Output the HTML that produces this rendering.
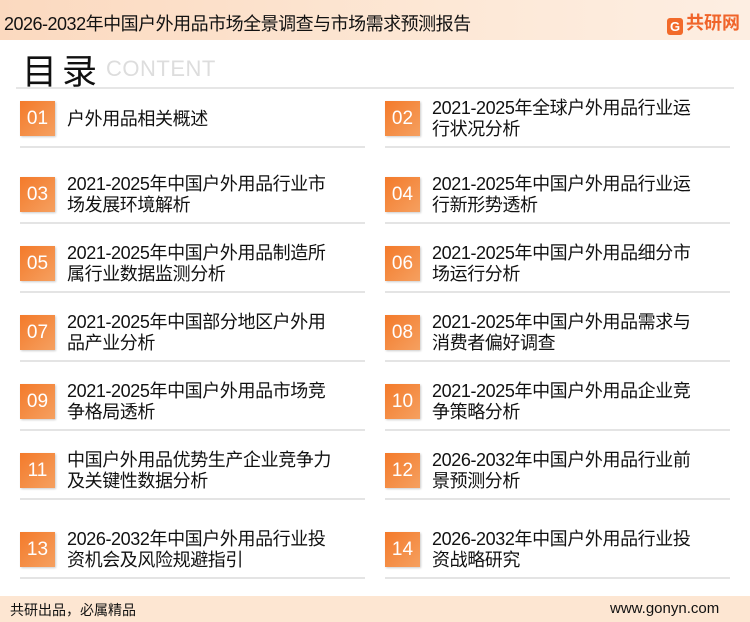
<!DOCTYPE html>
<html><head><meta charset="utf-8"><style>
*{margin:0;padding:0;box-sizing:border-box}
body{width:750px;height:622px;overflow:hidden;background:#fff;position:relative;font-family:"Liberation Sans","Noto Sans CJK SC",sans-serif;color:#111}
.hdr{position:absolute;left:0;top:0;width:750px;height:40px;background:linear-gradient(90deg,#fbd9bf,#fde8d6 60%,#fdeee2);}
.hdr .t{position:absolute;left:4px;top:10px;font-size:18px;letter-spacing:-0.5px}
.logo{position:absolute;left:667px;top:9px;font-size:18px;font-weight:bold;color:#f0642a}
.logo span{display:inline-block;width:16px;height:17px;background:#f26a2a;color:#fff;font-size:13px;text-align:center;line-height:17px;border-radius:3px;margin-right:3px;vertical-align:-2px}
.ml{position:absolute;left:22px;top:44px;font-size:35px}
.ml2{position:absolute;left:62px;top:44px;font-size:35px}
.ct{position:absolute;left:106px;top:56px;font-size:22px;color:#ddd;letter-spacing:0.5px}
.hl{position:absolute;left:16px;top:87px;width:718px;height:2px;background:#e6e6e6}
.it{position:absolute;width:345px;height:69px}
.b{position:absolute;left:0;top:5px;width:35px;height:35px;background:linear-gradient(135deg,#f47a2a,#f5a060);color:#fff;font-size:19px;text-align:center;line-height:35px;box-shadow:1px 1px 2px #ccc}
.x{position:absolute;left:47px;top:0;height:46px;width:270px;display:flex;align-items:center;font-size:18px;line-height:21px;letter-spacing:-0.4px}
.s{position:absolute;left:0;top:50px;width:345px;height:2px;background:#e4e4e4}
.ft{position:absolute;left:0;top:596px;width:750px;height:26px;background:#fde6d2}
.ft .a{position:absolute;left:10px;top:4px;font-size:14px}
.ft .w{position:absolute;left:610px;top:4px;font-size:15px}
</style></head><body>
<div class="hdr"><div class="t">2026-2032年中国户外用品市场全景调查与市场需求预测报告</div><div class="logo"><span>G</span>共研网</div></div>
<div class="ml">目</div><div class="ml2">录</div><div class="ct">CONTENT</div>
<div class="hl"></div>

<div class="it" style="left:20px;top:96px"><div class="b">01</div><div class="x">户外用品相关概述</div><div class="s"></div></div>
<div class="it" style="left:385px;top:96px"><div class="b">02</div><div class="x">2021-2025年全球户外用品行业运行状况分析</div><div class="s"></div></div>
<div class="it" style="left:20px;top:172px"><div class="b">03</div><div class="x">2021-2025年中国户外用品行业市场发展环境解析</div><div class="s"></div></div>
<div class="it" style="left:385px;top:172px"><div class="b">04</div><div class="x">2021-2025年中国户外用品行业运行新形势透析</div><div class="s"></div></div>
<div class="it" style="left:20px;top:241px"><div class="b">05</div><div class="x">2021-2025年中国户外用品制造所属行业数据监测分析</div><div class="s"></div></div>
<div class="it" style="left:385px;top:241px"><div class="b">06</div><div class="x">2021-2025年中国户外用品细分市场运行分析</div><div class="s"></div></div>
<div class="it" style="left:20px;top:310px"><div class="b">07</div><div class="x">2021-2025年中国部分地区户外用品产业分析</div><div class="s"></div></div>
<div class="it" style="left:385px;top:310px"><div class="b">08</div><div class="x">2021-2025年中国户外用品需求与消费者偏好调查</div><div class="s"></div></div>
<div class="it" style="left:20px;top:379px"><div class="b">09</div><div class="x">2021-2025年中国户外用品市场竞争格局透析</div><div class="s"></div></div>
<div class="it" style="left:385px;top:379px"><div class="b">10</div><div class="x">2021-2025年中国户外用品企业竞争策略分析</div><div class="s"></div></div>
<div class="it" style="left:20px;top:448px"><div class="b">11</div><div class="x">中国户外用品优势生产企业竞争力及关键性数据分析</div><div class="s"></div></div>
<div class="it" style="left:385px;top:448px"><div class="b">12</div><div class="x">2026-2032年中国户外用品行业前景预测分析</div><div class="s"></div></div>
<div class="it" style="left:20px;top:527px"><div class="b">13</div><div class="x">2026-2032年中国户外用品行业投资机会及风险规避指引</div><div class="s"></div></div>
<div class="it" style="left:385px;top:527px"><div class="b">14</div><div class="x">2026-2032年中国户外用品行业投资战略研究</div><div class="s"></div></div>

<div class="ft"><div class="a">共研出品，必属精品</div><div class="w">www.gonyn.com</div></div>
</body></html>
